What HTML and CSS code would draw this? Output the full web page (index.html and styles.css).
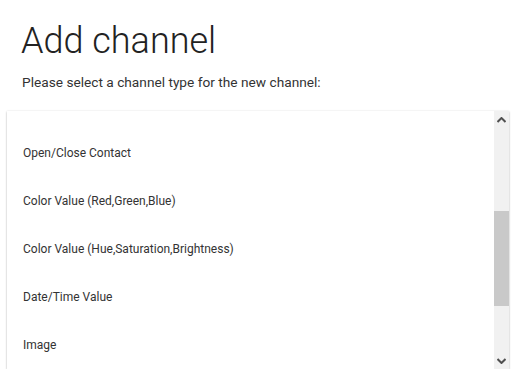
FILE: index.html
```html
<!DOCTYPE html>
<html>
<head>
<meta charset="utf-8">
<link rel="stylesheet" href="styles.css">
</head>
<body>
<div class="page">
  <h1 class="title">Add channel</h1>
  <p class="subtitle">Please select a channel type for the new channel:</p>
  <div class="listbox">
    <ul class="items">
      <li class="item">Open/Close Contact</li>
      <li class="item">Color Value (Red,Green,Blue)</li>
      <li class="item">Color Value (Hue,Saturation,Brightness)</li>
      <li class="item">Date/Time Value</li>
      <li class="item">Image</li>
    </ul>
    <div class="scrollbar">
      <div class="arrow up"><svg width="9" height="6" viewBox="0 0 9 6"><path d="M0.5 5 L4.5 1 L8.5 5" fill="none" stroke="#505050" stroke-width="2"/></svg></div>
      <div class="track">
        <div class="thumb"></div>
      </div>
      <div class="arrow down"><svg width="9" height="6" viewBox="0 0 9 6"><path d="M0.5 1 L4.5 5 L8.5 1" fill="none" stroke="#505050" stroke-width="2"/></svg></div>
    </div>
  </div>
</div>
</body>
</html>
```

FILE: styles.css
```css
html, body {
  margin: 0;
  padding: 0;
  background: #ffffff;
}
.page {
  font-family: Roboto, "Liberation Sans", sans-serif;
  color: #222222;
  padding: 0 4px 0 7px;
}
.title {
  margin: 0;
  padding: 21px 0 0 14px;
  font-size: 36px;
  font-weight: 300;
  line-height: 40px;
  color: #222;
}
.subtitle {
  margin: 0;
  padding: 12px 0 0 15px;
  font-size: 13.7px;
  line-height: 18px;
  color: #333;
}
.listbox {
  margin-top: 20px;
  height: 258px;
  display: flex;
  background: #fff;
  box-shadow: 0 1px 2px rgba(0,0,0,0.25), 0 0 2px rgba(0,0,0,0.08);
  overflow: hidden;
}
.items {
  flex: 1;
  list-style: none;
  margin: 0;
  padding: 18px 0 0 0;
}
.item {
  height: 48px;
  display: flex;
  align-items: center;
  padding-left: 16px;
  font-size: 12px;
  color: #333;
}
.scrollbar {
  width: 15px;
  background: #f1f1f1;
  display: flex;
  flex-direction: column;
}
.arrow {
  height: 17px;
  display: flex;
  align-items: center;
  justify-content: center;
}
.track {
  flex: 1;
  padding-top: 83px;
}
.thumb {
  height: 95px;
  background: #c9c9c9;
}
```
